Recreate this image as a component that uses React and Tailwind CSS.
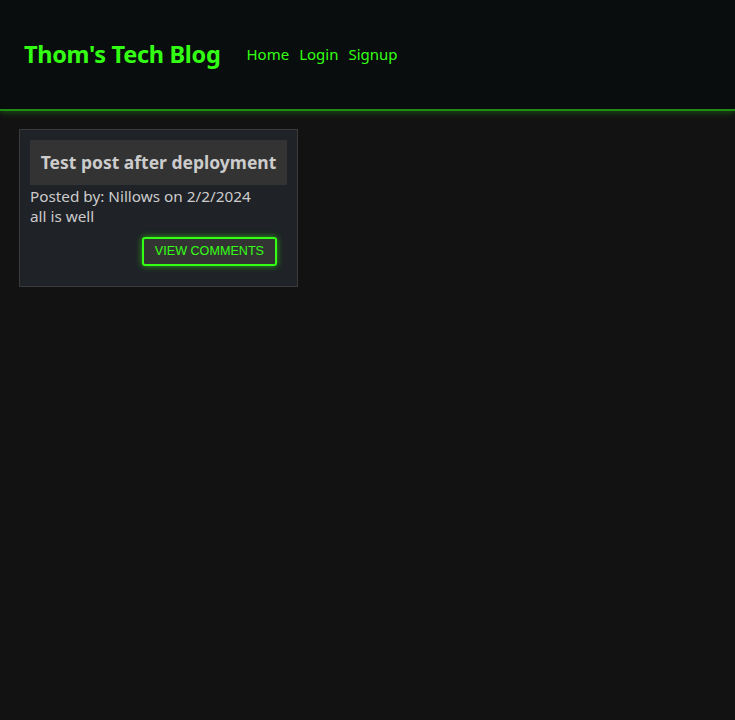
export default function App() {
  return (
    <div className="min-h-[720px] bg-[#121212] font-['Noto_Sans',sans-serif]">
      <header className="h-[111px] bg-[#0a0d0d] border-b-2 border-[#1f8a14] shadow-[0_2px_6px_rgba(40,180,20,0.35)] flex items-center px-6">
        <h1 className="text-[23.5px] font-bold text-[#33ff14] tracking-[-0.3px]">Thom's Tech Blog</h1>
        <nav className="ml-[26px] flex gap-[10px] text-[15px] text-[#33ff14]">
          <a>Home</a>
          <a>Login</a>
          <a>Signup</a>
        </nav>
      </header>
      <main className="px-[19px] pt-[18px]">
        <div className="w-[279px] bg-[#1f2227] border border-[#3a3a3a] px-[10px] pt-[10px] pb-[20px]">
          <div className="bg-[#333333] h-[45px] flex items-center justify-center">
            <h2 className="text-[17.5px] font-bold text-[#cccccc]">Test post after deployment</h2>
          </div>
          <p className="text-[15.3px] text-[#cccccc] leading-[20px] mt-[1px]">Posted by: Nillows on 2/2/2024</p>
          <p className="text-[15.3px] text-[#cccccc] leading-[20px]">all is well</p>
          <div className="flex justify-end mt-[11px] pr-[10px]">
            <button className="h-[29px] px-[11px] border-2 border-[#33ff14] rounded-[3px] bg-[#333333] text-[#33ff14] text-[12.6px] font-['Liberation_Sans',sans-serif] shadow-[0_0_6px_rgba(51,255,20,0.6)]">VIEW COMMENTS</button>
          </div>
        </div>
      </main>
    </div>
  );
}
